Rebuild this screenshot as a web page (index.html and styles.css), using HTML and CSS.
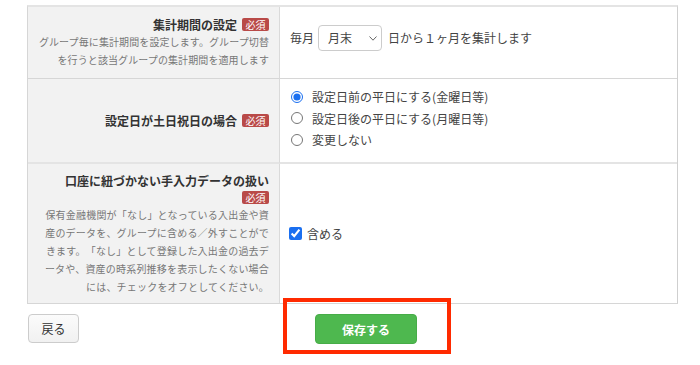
FILE: index.html
```html
<!DOCTYPE html>
<html lang="ja">
<head>
<meta charset="utf-8">
<title>グループ設定</title>
<link rel="stylesheet" href="styles.css">
</head>
<body>
<div class="page">
  <div class="form-table">
    <div class="cell head r1">
      <div class="label">集計期間の設定<span class="badge">必須</span></div>
      <div class="desc">グループ毎に集計期間を設定します。グループ切替<br>を行うと該当グループの集計期間を適用します</div>
    </div>
    <div class="cell body r1 period">
      <span>毎月</span>
      <span class="select"><span>月末</span><svg class="chev" width="8" height="5" viewBox="0 0 8 5"><polyline points="0.5,0.5 4,4.2 7.5,0.5" fill="none" stroke="#666" stroke-width="1"/></svg></span>
      <span>日から１ヶ月を集計します</span>
    </div>

    <div class="cell head r2 middle">
      <div class="label">設定日が土日祝日の場合<span class="badge">必須</span></div>
    </div>
    <div class="cell body r2 radios">
      <label class="opt"><input type="radio" name="holiday" checked><span>設定日前の平日にする(金曜日等)</span></label>
      <label class="opt"><input type="radio" name="holiday"><span>設定日後の平日にする(月曜日等)</span></label>
      <label class="opt"><input type="radio" name="holiday"><span>変更しない</span></label>
    </div>

    <div class="cell head r3">
      <div class="label">口座に紐づかない手入力データの扱い</div>
      <div class="badge-line"><span class="badge">必須</span></div>
      <div class="desc wide">保有金融機関が「なし」となっている入出金や資<br>産のデータを、グループに含める／外すことがで<br>きます。「なし」として登録した入出金の過去デ<br>ータや、資産の時系列推移を表示したくない場合<br>には、チェックをオフとしてください。</div>
    </div>
    <div class="cell body r3 check">
      <label class="opt"><input type="checkbox" checked><span>含める</span></label>
    </div>
  </div>

  <div class="actions">
    <button class="btn btn-back" type="button">戻る</button>
    <button class="btn btn-save" type="button">保存する</button>
  </div>

  <div class="highlight"></div>
</div>
</body>
</html>
```

FILE: styles.css
```css
html, body {
  margin: 0;
  padding: 0;
  background: #ffffff;
}

body {
  font-family: "Noto Sans CJK JP", "Noto Sans", sans-serif;
  color: #333333;
  text-spacing-trim: space-all;
}

.page {
  position: relative;
  width: 700px;
  height: 365px;
  padding: 5px 0 0 27px;
  box-sizing: border-box;
}

.form-table {
  display: grid;
  grid-template-columns: 252px 397px;
  width: 651px;
  border: 1px solid #d6d6d6;
  border-top: 2px solid #e4e4e4;
  border-right: 1px solid #cfcfcf;
  box-sizing: border-box;
}

.cell {
  box-sizing: border-box;
}

.head {
  background: #f2f2f2;
  border-right: 1px solid #dadada;
  padding: 0 10px;
  text-align: right;
}

.body {
  background: #ffffff;
  padding: 0 10px;
  color: #444444;
  font-size: 12px;
}

.r1 {
  height: 72px;
  border-bottom: 1px solid #d6d6d6;
}

.r2 {
  height: 85px;
  border-bottom: 2px solid #e4e4e4;
}

.r3 {
  height: 139px;
}

.head.r1 {
  padding-top: 8px;
}

.head.r3 {
  padding-top: 7px;
}

.head.middle {
  display: flex;
  align-items: center;
  justify-content: flex-end;
}

.label {
  display: flex;
  align-items: center;
  justify-content: flex-end;
  height: 18px;
  font-size: 12px;
  font-weight: bold;
  color: #333333;
  white-space: nowrap;
}

.badge {
  display: inline-block;
  height: 13px;
  line-height: 13px;
  padding: 0 3.5px;
  margin-left: 5px;
  background: #b94a48;
  color: #ffffff;
  font-size: 10px;
  font-weight: normal;
  letter-spacing: 0;
  border-radius: 2px;
}

.badge-line {
  display: flex;
  justify-content: flex-end;
  align-items: center;
  height: 17px;
}

.desc {
  font-size: 10px;
  line-height: 18px;
  letter-spacing: 0.1px;
  color: #777777;
  white-space: nowrap;
}

.desc.wide {
  letter-spacing: 0.2px;
}

.period {
  display: flex;
  align-items: flex-start;
  padding-top: 18px;
  line-height: 26px;
}

.select {
  display: inline-flex;
  align-items: center;
  justify-content: space-between;
  width: 64px;
  height: 26px;
  margin: 0 6px 0 4px;
  padding: 0 4px 0 9px;
  box-sizing: border-box;
  border: 1px solid #cccccc;
  border-radius: 4px;
  background: #ffffff;
  color: #444444;
}

.chev {
  display: block;
  margin-top: 1px;
}

.radios {
  display: flex;
  flex-direction: column;
  padding-top: 7px;
}

.opt {
  display: flex;
  align-items: center;
  height: 21.5px;
  font-size: 12px;
  color: #444444;
}

.opt input[type="radio"] {
  width: 12px;
  height: 12px;
  margin: 0 9px 0 1px;
  accent-color: #1a6ff0;
}

.check {
  display: flex;
  align-items: center;
}

.opt input[type="checkbox"] {
  width: 13px;
  height: 13px;
  margin: 0 5px 0 -1px;
  accent-color: #1a6ff0;
}

.actions {
  display: flex;
  align-items: flex-start;
  margin-top: 10px;
  padding-left: 1px;
}

.btn {
  font-family: "Noto Sans CJK JP", "Noto Sans", sans-serif;
  font-size: 12px;
  border-radius: 4px;
  padding: 0;
  cursor: pointer;
}

.btn-back {
  width: 51px;
  height: 29px;
  color: #333333;
  background: linear-gradient(#fbfbfb, #f1f1f1);
  border: 1px solid #cccccc;
}

.btn-save {
  width: 102px;
  height: 30px;
  margin-left: 236px;
  color: #ffffff;
  font-weight: bold;
  background: #4eb84f;
  border: 1px solid #47ac48;
}

.highlight {
  position: absolute;
  left: 283px;
  top: 298px;
  width: 168px;
  height: 56px;
  box-sizing: border-box;
  border: 4px solid #ff2a00;
  pointer-events: none;
}
```
